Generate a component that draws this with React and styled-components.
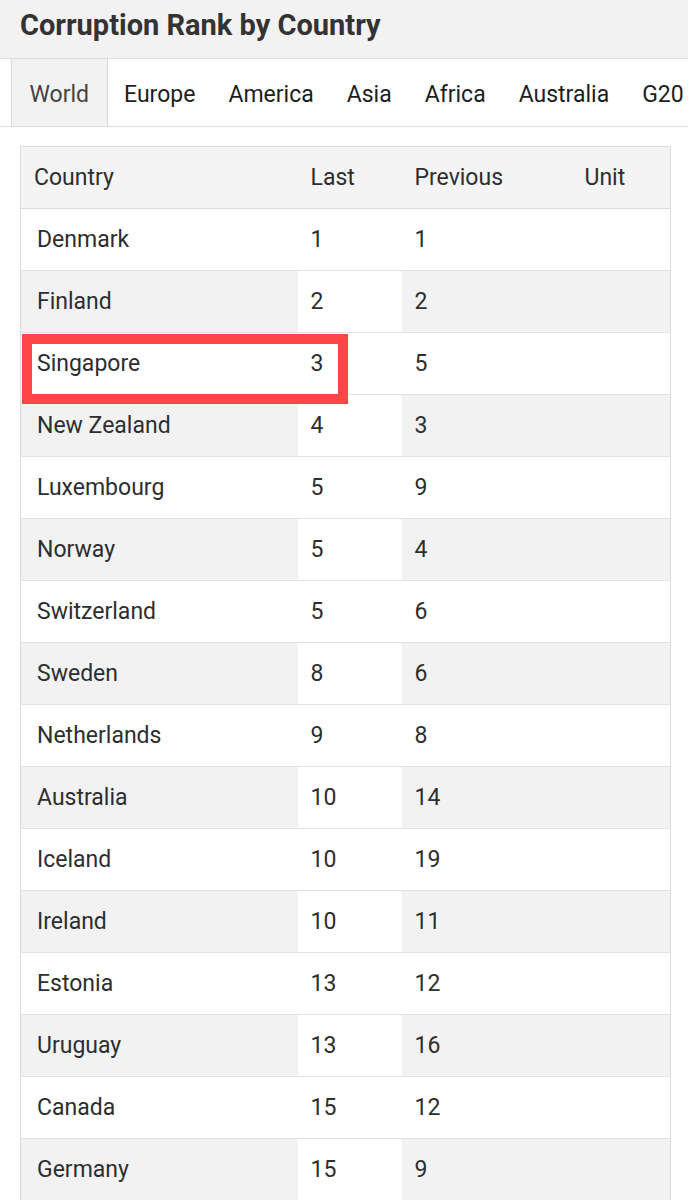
import styled, { createGlobalStyle } from 'styled-components';

const GlobalStyle = createGlobalStyle`
  body {
    margin: 0;
    background: #fff;
    font-family: Roboto, "Liberation Sans", sans-serif;
    color: #333;
  }
`;

const Page = styled.div`
  width: 688px;
  height: 1200px;
  overflow: hidden;
`;

const TitleBar = styled.header`
  height: 59px;
  background: #f2f2f2;
  border-bottom: 1px solid #dcdcdc;
  display: flex;
  align-items: center;
  padding: 0 20px 8px;
  box-sizing: border-box;
`;

const Title = styled.h1`
  margin: 0;
  font-size: 29px;
  font-weight: 700;
  color: #333;
  white-space: nowrap;
`;

const Tabs = styled.nav`
  display: flex;
  height: 67px;
  padding-left: 11px;
  border-bottom: 1px solid #dcdcdc;
  overflow: hidden;
`;

const Tab = styled.div`
  display: flex;
  align-items: center;
  padding: 3px ${(p) => (p.$active ? 17.5 : 15.5)}px 0;
  font-size: 23px;
  white-space: nowrap;
  color: ${(p) => (p.$active ? '#444' : '#1e1e1e')};
  background: ${(p) => (p.$active ? '#f2f2f2' : 'transparent')};
  border-left: 1px solid ${(p) => (p.$active ? '#dcdcdc' : 'transparent')};
  border-right: 1px solid ${(p) => (p.$active ? '#dcdcdc' : 'transparent')};
`;

const TableWrap = styled.div`
  position: relative;
  padding: 19px 19px 0 20px;
`;

const Table = styled.table`
  width: 650px;
  border-collapse: collapse;
  table-layout: fixed;
  border: 1px solid #dcdcdc;
  font-size: 23px;
  color: #2e2e2e;
`;

const Th = styled.th`
  height: 61px;
  text-align: left;
  font-weight: 400;
  padding: 0 0 0 ${(p) => p.$pad || 13}px;
  background: #f4f4f4;
  border-bottom: 1px solid #dcdcdc;
`;

const Row = styled.tr`
  background: ${(p) => (p.$striped ? '#f2f2f2' : '#fff')};
  border-bottom: 1px solid #e2e2e2;
`;

const Td = styled.td`
  height: 61px;
  padding: 0 0 0 ${(p) => p.$pad || 13}px;
  background: ${(p) => (p.$sorted ? '#fff' : 'transparent')};
`;

const Highlight = styled.div`
  position: absolute;
  left: 22px;
  top: 207px;
  width: 326px;
  height: 70px;
  box-sizing: border-box;
  border: 10px solid #ff4646;
  pointer-events: none;
`;

const tabs = ['World', 'Europe', 'America', 'Asia', 'Africa', 'Australia', 'G20'];

const rows = [
  ['Denmark', 1, 1],
  ['Finland', 2, 2],
  ['Singapore', 3, 5],
  ['New Zealand', 4, 3],
  ['Luxembourg', 5, 9],
  ['Norway', 5, 4],
  ['Switzerland', 5, 6],
  ['Sweden', 8, 6],
  ['Netherlands', 9, 8],
  ['Australia', 10, 14],
  ['Iceland', 10, 19],
  ['Ireland', 10, 11],
  ['Estonia', 13, 12],
  ['Uruguay', 13, 16],
  ['Canada', 15, 12],
  ['Germany', 15, 9],
];

export default function App() {
  return (
    <Page>
      <GlobalStyle />
      <TitleBar>
        <Title>Corruption Rank by Country</Title>
      </TitleBar>
      <Tabs>
        {tabs.map((t, i) => (
          <Tab key={t} $active={i === 0}>
            {t}
          </Tab>
        ))}
      </Tabs>
      <TableWrap>
        <Table>
          <colgroup>
            <col style={{ width: 277 }} />
            <col style={{ width: 104 }} />
            <col style={{ width: 170 }} />
            <col style={{ width: 99 }} />
          </colgroup>
          <thead>
            <tr>
              <Th>Country</Th>
              <Th>Last</Th>
              <Th>Previous</Th>
              <Th>Unit</Th>
            </tr>
          </thead>
          <tbody>
            {rows.map(([name, last, prev], i) => (
              <Row key={name} $striped={i % 2 === 1}>
                <Td $pad={16}>{name}</Td>
                <Td $sorted>{last}</Td>
                <Td>{prev}</Td>
                <Td />
              </Row>
            ))}
          </tbody>
        </Table>
        <Highlight />
      </TableWrap>
    </Page>
  );
}
